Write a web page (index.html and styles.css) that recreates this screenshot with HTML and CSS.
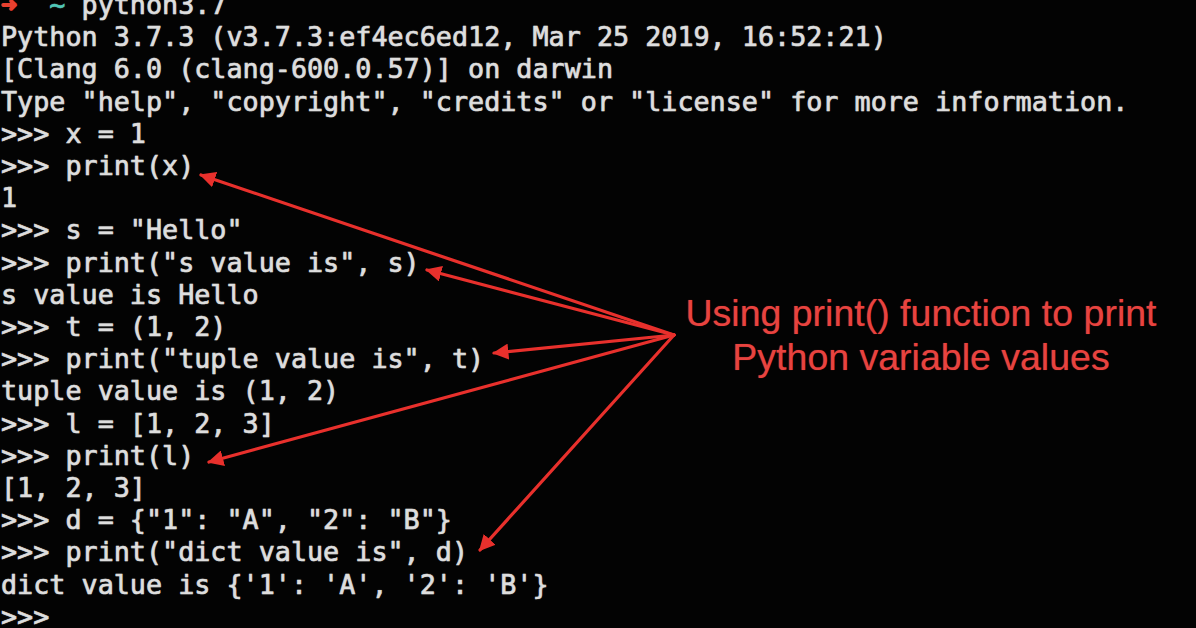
FILE: index.html
```html
<!DOCTYPE html>
<html lang="en">
<head>
<meta charset="utf-8">
<title>Python print()</title>
<link rel="stylesheet" href="styles.css">
</head>
<body>
<main class="screen">
  <pre class="term"><span class="prompt-arrow">➜</span>  <span class="tilde">~</span> python3.7
Python 3.7.3 (v3.7.3:ef4ec6ed12, Mar 25 2019, 16:52:21)
[Clang 6.0 (clang-600.0.57)] on darwin
Type "help", "copyright", "credits" or "license" for more information.
&gt;&gt;&gt; x = 1
&gt;&gt;&gt; print(x)
1
&gt;&gt;&gt; s = "Hello"
&gt;&gt;&gt; print("s value is", s)
s value is Hello
&gt;&gt;&gt; t = (1, 2)
&gt;&gt;&gt; print("tuple value is", t)
tuple value is (1, 2)
&gt;&gt;&gt; l = [1, 2, 3]
&gt;&gt;&gt; print(l)
[1, 2, 3]
&gt;&gt;&gt; d = {"1": "A", "2": "B"}
&gt;&gt;&gt; print("dict value is", d)
dict value is {'1': 'A', '2': 'B'}
&gt;&gt;&gt;</pre>

  <svg class="arrows" width="1196" height="628" viewBox="0 0 1196 628" aria-hidden="true">
    <defs>
      <marker id="head" viewBox="0 0 10 10" refX="9" refY="5" markerWidth="5" markerHeight="5" orient="auto-start-reverse" markerUnits="strokeWidth">
        <path d="M0 0 L10 5 L0 10 Z" fill="#e8302c"/>
      </marker>
    </defs>
    <g stroke="#e8302c" stroke-width="3.2" stroke-linecap="round" fill="none">
      <line x1="674" y1="335" x2="201" y2="175" marker-end="url(#head)"/>
      <line x1="674" y1="335" x2="427" y2="270" marker-end="url(#head)"/>
      <line x1="674" y1="335" x2="494" y2="353" marker-end="url(#head)"/>
      <line x1="674" y1="335" x2="209" y2="462" marker-end="url(#head)"/>
      <line x1="674" y1="335" x2="480" y2="550" marker-end="url(#head)"/>
    </g>
  </svg>

  <p class="note">Using print() function to print<br>Python variable values</p>
</main>
</body>
</html>
```

FILE: styles.css
```css
html, body {
  margin: 0;
  padding: 0;
  background: #000;
}

.screen {
  position: relative;
  width: 1196px;
  height: 628px;
  overflow: hidden;
  background: #030303;
}

.term {
  margin: -11px 0 0 0;
  padding: 0 0 0 1px;
  font-family: "DejaVu Sans Mono", "Liberation Mono", monospace;
  font-size: 26.75px;
  line-height: 32.2px;
  color: #dedede;
  -webkit-text-stroke: 0.6px #dedede;
  text-shadow: 0 0 1.5px rgba(255, 255, 255, 0.45);
  white-space: pre;
}

.prompt-arrow {
  color: #e8402f;
  -webkit-text-stroke: 1.5px #e8402f;
  text-shadow: none;
}

.tilde {
  color: #4fc7b8;
  -webkit-text-stroke: 0.6px #4fc7b8;
}

.arrows {
  position: absolute;
  left: 0;
  top: 0;
}

.note {
  position: absolute;
  left: 660px;
  top: 291px;
  width: 522px;
  margin: 0;
  font-family: "Liberation Sans", Arial, sans-serif;
  font-size: 37.5px;
  line-height: 44px;
  text-align: center;
  color: #e8433f;
  text-shadow: 0 0 1px rgba(232, 67, 63, 0.6);
}
```
